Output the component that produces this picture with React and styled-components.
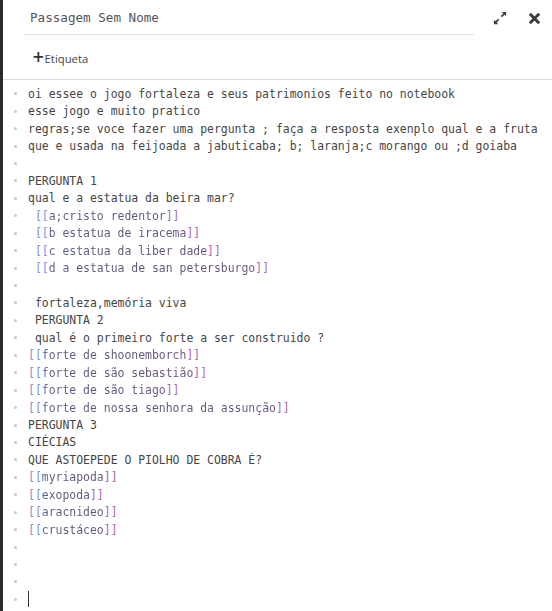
import React from 'react';
import styled, { createGlobalStyle } from 'styled-components';

const GlobalStyle = createGlobalStyle`
  html, body {
    margin: 0;
    padding: 0;
    background: #fff;
  }
  body {
    font-family: "Open Sans", "DejaVu Sans", sans-serif;
  }
`;

// passage source, one entry per editor line; [[links]] stay inline
const lines = [
  'oi essee o jogo fortaleza e seus patrimonios feito no notebook',
  'esse jogo e muito pratico',
  'regras;se voce fazer uma pergunta ; faça a resposta exenplo qual e a fruta',
  'que e usada na feijoada a jabuticaba; b; laranja;c morango ou ;d goiaba',
  '',
  'PERGUNTA 1',
  'qual e a estatua da beira mar?',
  ' [[a;cristo redentor]]',
  ' [[b estatua de iracema]]',
  ' [[c estatua da liber dade]]',
  ' [[d a estatua de san petersburgo]]',
  '',
  ' fortaleza,memória viva',
  ' PERGUNTA 2',
  ' qual é o primeiro forte a ser construido ?',
  '[[forte de shoonemborch]]',
  '[[forte de são sebastião]]',
  '[[forte de são tiago]]',
  '[[forte de nossa senhora da assunção]]',
  'PERGUNTA 3',
  'CIÉCIAS',
  'QUE ASTOEPEDE O PIOLHO DE COBRA É?',
  '[[myriapoda]]',
  '[[exopoda]]',
  '[[aracnideo]]',
  '[[crustáceo]]',
  '',
  '',
  '',
];

function renderLine(text) {
  const parts = text.split(/(\[\[.*?\]\])/);
  return parts.map((p, i) =>
    p.startsWith('[[') ? (
      <span key={i}>
        <Bracket $open>[[</Bracket>
        <LinkText>{p.slice(2, -2)}</LinkText>
        <Bracket>]]</Bracket>
      </span>
    ) : (
      <span key={i}>{p}</span>
    )
  );
}

function ExpandIcon() {
  return (
    <svg width="14" height="14" viewBox="0 0 16 16">
      <path d="M15 1 L10 1 L11.8 2.8 L8.8 5.8 L10.2 7.2 L13.2 4.2 L15 6 Z" fill="#404040" />
      <path d="M1 15 L6 15 L4.2 13.2 L7.2 10.2 L5.8 8.8 L2.8 11.8 L1 10 Z" fill="#404040" />
    </svg>
  );
}

function CloseIcon() {
  return (
    <svg width="11" height="11" viewBox="0 0 12 12">
      <path d="M2 2 L10 10 M10 2 L2 10" stroke="#3a3a3a" strokeWidth="3.2" strokeLinecap="square" />
    </svg>
  );
}

function App() {
  return (
    <>
      <GlobalStyle />
      <Dialog>
        <Header>
          <TitleField>Passagem Sem Nome</TitleField>
          <IconButton $w={32}><ExpandIcon /></IconButton>
          <IconButton $w={36}><CloseIcon /></IconButton>
        </Header>
        <Tags>
          <AddTag>
            <Plus>+</Plus>Etiqueta
          </AddTag>
        </Tags>
        <Editor>
          {lines.map((l, i) => (
            <Line key={i}>
              <Dot />
              <Code>{renderLine(l)}</Code>
            </Line>
          ))}
          <Line>
            <Dot />
            <Code><Cursor /></Code>
          </Line>
        </Editor>
      </Dialog>
    </>
  );
}

export default App;

const Dialog = styled.div`
  height: 100vh;
  box-sizing: border-box;
  border-left: 3px solid #2b2b2b;
  background: #fff;
  display: flex;
  flex-direction: column;
  overflow: hidden;
`;

const Header = styled.div`
  display: flex;
  align-items: center;
  height: 35px;
  padding-left: 20px;
`;

const TitleField = styled.div`
  width: 444px;
  height: 34px;
  line-height: 36px;
  padding-left: 7px;
  border-bottom: 1px solid #e3e3e3;
  font-family: "DejaVu Sans Mono", monospace;
  font-size: 12.6px;
  color: #555;
  margin-right: 10px;
`;

const IconButton = styled.div`
  width: ${p => p.$w}px;
  height: 34px;
  display: flex;
  align-items: center;
  justify-content: center;
  padding-top: 1px;
  box-sizing: border-box;
`;

const Tags = styled.div`
  height: 44px;
  display: flex;
  align-items: center;
  padding-left: 29px;
  border-bottom: 1px solid #dcdcdc;
`;

const AddTag = styled.div`
  display: flex;
  align-items: center;
  font-family: "Open Sans", sans-serif;
  font-size: 11.3px;
  color: #444;
  padding-top: 2px;
`;

const Plus = styled.span`
  font-family: "DejaVu Sans", sans-serif;
  font-weight: 700;
  font-size: 15px;
  color: #333;
  line-height: 1;
  position: relative;
  top: -1px;
`;

const Editor = styled.div`
  padding-top: 5px;
`;

const Line = styled.div`
  display: flex;
  align-items: center;
  height: 17.45px;
  font-family: "DejaVu Sans Mono", monospace;
  font-size: 11.45px;
  color: #454545;
  white-space: pre;
`;

const Dot = styled.span`
  width: 3px;
  height: 3px;
  border-radius: 50%;
  background: #c8c8c8;
  margin-left: 11px;
  margin-right: 11px;
  flex-shrink: 0;
`;

const Code = styled.span`
  display: flex;
  align-items: center;
  height: 100%;
`;

const Bracket = styled.span`
  color: ${p => (p.$open ? '#8591d8' : '#a56cb0')};
`;

const LinkText = styled.span`
  background: linear-gradient(90deg, #5b6088 0%, #5d5676 50%, #6c5484 100%);
  -webkit-background-clip: text;
  background-clip: text;
  color: transparent;
`;

const Cursor = styled.span`
  display: inline-block;
  width: 1px;
  height: 16px;
  background: #333;
`;
